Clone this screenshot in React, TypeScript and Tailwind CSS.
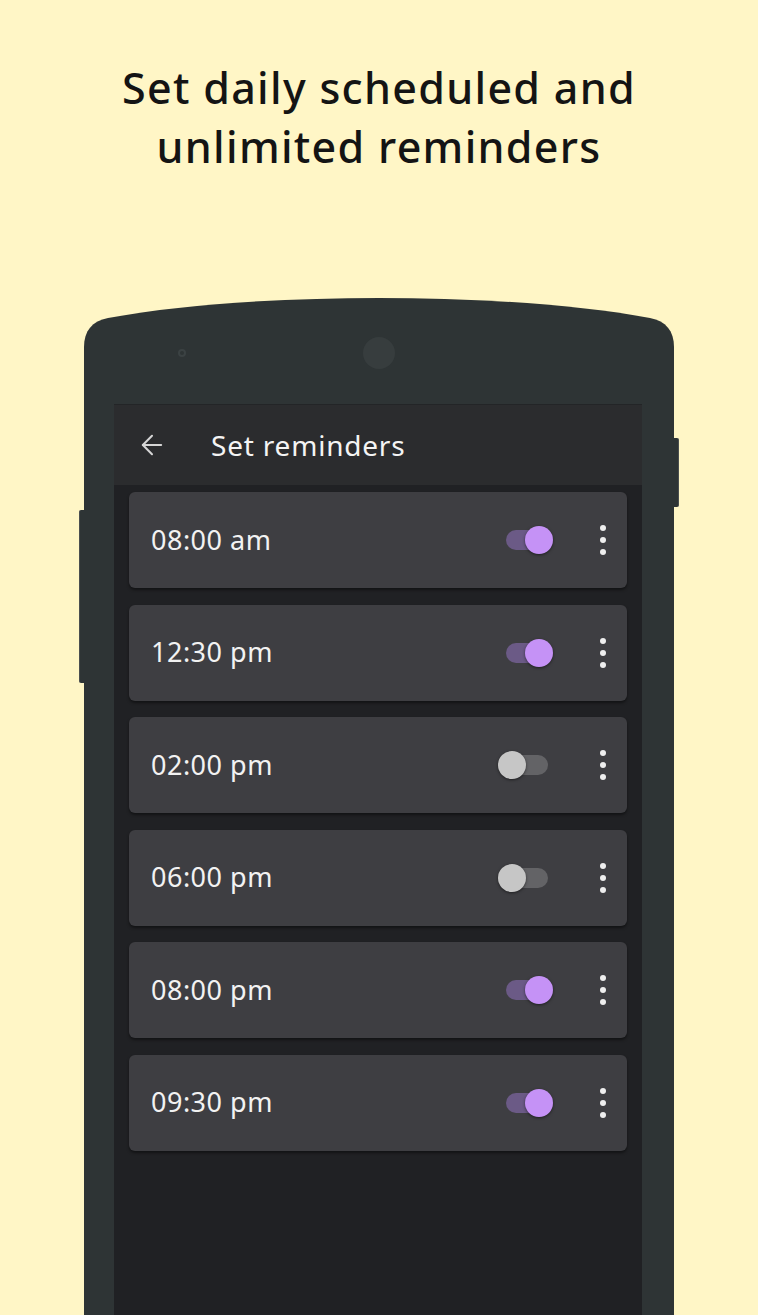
import React from 'react';

type Reminder = { time: string; on: boolean };

const reminders: Reminder[] = [
  { time: '08:00 am', on: true },
  { time: '12:30 pm', on: true },
  { time: '02:00 pm', on: false },
  { time: '06:00 pm', on: false },
  { time: '08:00 pm', on: true },
  { time: '09:30 pm', on: true },
];

const Toggle: React.FC<{ on: boolean }> = ({ on }) => (
  <div className="relative w-[55px] h-[28px]">
    <div
      className={
        on
          ? 'absolute left-[8px] top-[4px] w-[42px] h-[20px] rounded-full bg-[#6b5a86]'
          : 'absolute left-[8px] top-[4px] w-[42px] h-[20px] rounded-full bg-[#636366]'
      }
    />
    <div
      className={
        on
          ? 'absolute left-[27px] top-0 w-[28px] h-[28px] rounded-full bg-[#c592f6] shadow-[0_1px_3px_rgba(0,0,0,0.5)]'
          : 'absolute left-0 top-0 w-[28px] h-[28px] rounded-full bg-[#c6c6c6] shadow-[0_1px_3px_rgba(0,0,0,0.5)]'
      }
    />
  </div>
);

const MoreDots = () => (
  <div className="w-[24px] flex flex-col items-center gap-[6px]">
    <span className="w-[6px] h-[6px] rounded-full bg-[#eeeeee]" />
    <span className="w-[6px] h-[6px] rounded-full bg-[#eeeeee]" />
    <span className="w-[6px] h-[6px] rounded-full bg-[#eeeeee]" />
  </div>
);

const ReminderCard: React.FC<{ item: Reminder }> = ({ item }) => (
  <div className="h-[96px] rounded-[6px] bg-[#3e3e42] shadow-[0_2px_3px_rgba(0,0,0,0.45)] flex items-center pl-[22px] pr-[12px]">
    <span className="flex-1 text-[27px] tracking-[0.5px] text-[#f2f2f2]">{item.time}</span>
    <Toggle on={item.on} />
    <div className="w-[38px]" />
    <MoreDots />
  </div>
);

// top of the handset: curved edge, speaker dot and front camera
const PhoneCap = () => (
  <svg width="590" height="80" viewBox="0 0 590 80" className="block">
    <path
      d="M0 80 L0 49 C0 33 8 23 24 20 C100 6 200 0 295 0 C390 0 490 6 566 20 C582 23 590 33 590 49 L590 80 Z"
      fill="#2e3435"
    />
    <circle cx="98" cy="55" r="4" fill="#3b4243" />
    <circle cx="98" cy="55" r="2" fill="#2e3435" />
    <circle cx="295" cy="55" r="16" fill="#373d3e" />
  </svg>
);

export default function App() {
  return (
    <div
      className="w-[758px] h-[1315px] overflow-hidden bg-[#fff6c6] flex flex-col items-center"
      style={{ fontFamily: '"Noto Sans", "Open Sans", sans-serif' }}
    >
      <h1 className="mt-[58px] text-center text-[43px] leading-[59px] tracking-[1.3px] font-medium text-[#141414]">
        Set daily scheduled and
        <br />
        unlimited reminders
      </h1>

      <div className="relative mt-[122px] w-[590px] flex-1 flex flex-col">
        {/* side buttons */}
        <div className="absolute -left-[5px] top-[212px] w-[6px] h-[173px] rounded-l-[2px] bg-[#2e3435] border-l border-[#4a4f50]" />
        <div className="absolute -right-[5px] top-[140px] w-[6px] h-[69px] rounded-r-[2px] bg-[#2e3435] border-r border-[#4a4f50]" />

        <PhoneCap />
        <div className="flex-1 bg-[#2e3435] pt-[26px] pl-[30px] pr-[32px] flex">
          <div className="flex-1 flex flex-col bg-[#202124] border-t border-[#232527]">
            <div className="h-[80px] bg-[#2b2c2e] flex items-center pl-[27px]">
              <svg width="22" height="22" viewBox="0 0 24 24" fill="none" stroke="#d6d6d6" strokeWidth="2.2" strokeLinecap="round" strokeLinejoin="round">
                <path d="M22 12H2" />
                <path d="M12 2L2 12l10 10" />
              </svg>
              <span className="ml-[48px] text-[28px] tracking-[0.8px] text-[#f4f4f4]">Set reminders</span>
            </div>
            <div className="flex-1 px-[15px] pt-[7px] flex flex-col gap-[16.5px]">
              {reminders.map((r, i) => (
                <ReminderCard key={i} item={r} />
              ))}
            </div>
          </div>
        </div>
      </div>
    </div>
  );
}
